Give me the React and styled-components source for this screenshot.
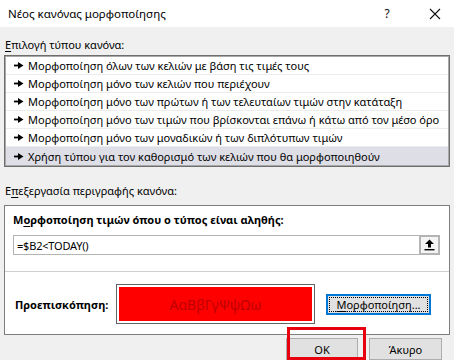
import React from "react";
import styled, { createGlobalStyle } from "styled-components";

const GlobalStyle = createGlobalStyle`
  html, body {
    margin: 0;
    padding: 0;
    background: #f0f0f0;
  }
  body {
    font-family: "Noto Sans", "Open Sans", sans-serif;
    font-size: 11px;
    color: #000;
  }
`;

const Dialog = styled.div`
  position: relative;
  width: 454px;
  height: 360px;
  background: #f0f0f0;
  overflow: hidden;
  display: flex;
  flex-direction: column;
`;

const TitleBar = styled.div`
  height: 27px;
  background: #ffffff;
  display: flex;
  align-items: center;
  padding-left: 8px;
  font-size: 11.5px;
`;

const Title = styled.div`
  flex: 1;
`;

const TitleBtn = styled.div`
  width: ${(p) => p.w}px;
  margin-right: ${(p) => p.mr || 0}px;
  height: 27px;
  display: flex;
  align-items: center;
  justify-content: center;
  color: #111;
  font-size: 12px;
`;

const Body = styled.div`
  padding: 0 4px;
  display: flex;
  flex-direction: column;
`;

const GroupLabel = styled.div`
  height: 18px;
  line-height: 18px;
  margin-top: ${(p) => p.top || 0}px;
  margin-left: 1px;
  margin-bottom: ${(p) => p.bottom || 0}px;
`;

const Ul = styled.span`
  text-decoration: underline;
  text-underline-offset: 2px;
`;

const List = styled.div`
  border: 1px solid #6e6e6e;
  box-shadow: inset 0 0 0 1px #a8a8a8;
  background: #fff;
  padding: 1px;
  display: flex;
  flex-direction: column;
`;

const Row = styled.div`
  height: 18px;
  display: flex;
  align-items: center;
  padding-left: 8px;
  gap: 4px;
  background: ${(p) => (p.selected ? "#dedee6" : "#fff")};
  border-bottom: ${(p) => (p.last ? "none" : "1px solid #ececec")};
  box-sizing: border-box;
  white-space: nowrap;
  svg {
    flex-shrink: 0;
  }
`;

const Panel = styled.div`
  border: 1px solid #7d7d7d;
  background: #fff;
  height: 128px;
  display: flex;
  flex-direction: column;
`;

const FormulaSection = styled.div`
  padding: 5px 9px 0 8px;
  height: 60px;
  border-bottom: 1px solid #cfcfcf;
  display: flex;
  flex-direction: column;
`;

const Heading = styled.div`
  font-weight: bold;
  height: 18px;
  line-height: 18px;
  margin-bottom: 6px;
`;

const FormulaBox = styled.div`
  display: flex;
  height: 20px;
  width: 427px;
`;

const FormulaInput = styled.div`
  flex: 1;
  border: 1px solid #b4b4b4;
  border-right: none;
  display: flex;
  align-items: center;
  padding-left: 3px;
  box-sizing: border-box;
  letter-spacing: -0.2px;
`;

const CollapseBtn = styled.div`
  width: 21px;
  height: 20px;
  box-sizing: border-box;
  border: 2px solid #b4b4b4;
  background: #f4f4f4;
  display: flex;
  align-items: center;
  justify-content: center;
`;

const PreviewSection = styled.div`
  flex: 1;
  display: flex;
  align-items: center;
  padding-left: 10px;
  padding-top: 2px;
`;

const PreviewLabel = styled.div`
  font-weight: bold;
  width: 101px;
`;

const PreviewBox = styled.div`
  width: 199px;
  height: 40px;
  box-sizing: border-box;
  border: 1px solid #646464;
  padding: 2px;
  display: flex;
  margin-right: 11px;
`;

const PreviewFill = styled.div`
  flex: 1;
  background: #ff0000;
  color: #c00000;
  display: flex;
  align-items: center;
  justify-content: center;
  font-size: 14px;
`;

const Button = styled.div`
  box-sizing: border-box;
  width: ${(p) => p.w}px;
  height: ${(p) => p.h || 22}px;
  background: #e1e1e1;
  border: ${(p) => (p.focused ? "2px solid #0078d7" : "1px solid #adadad")};
  display: flex;
  align-items: center;
  justify-content: center;
  padding: ${(p) => (p.focused ? "1px" : "0")};
`;

const FocusRing = styled.div`
  flex: 1;
  align-self: stretch;
  border: 1px dotted #000;
  display: flex;
  align-items: center;
  justify-content: center;
`;

const Footer = styled.div`
  display: flex;
  justify-content: flex-end;
  gap: 11px;
  padding: 3px 8px 0 0;
`;

const Highlight = styled.div`
  position: absolute;
  left: 287px;
  top: 327px;
  width: 79px;
  height: 33px;
  box-sizing: border-box;
  border: 3px solid #e8000f;
  pointer-events: none;
`;

const Bullet = () => (
  <svg width="10" height="7" viewBox="0 0 10 7">
    <rect x="0" y="2.6" width="5" height="1.8" fill="#000" />
    <path d="M4 0 L9.5 3.5 L4 7 Z" fill="#000" />
  </svg>
);

const rules = [
  "Μορφοποίηση όλων των κελιών με βάση τις τιμές τους",
  "Μορφοποίηση μόνο των κελιών που περιέχουν",
  "Μορφοποίηση μόνο των πρώτων ή των τελευταίων τιμών στην κατάταξη",
  "Μορφοποίηση μόνο των τιμών που βρίσκονται επάνω ή κάτω από τον μέσο όρο",
  "Μορφοποίηση μόνο των μοναδικών ή των διπλότυπων τιμών",
  "Χρήση τύπου για τον καθορισμό των κελιών που θα μορφοποιηθούν",
];

export default function App() {
  return (
    <>
      <GlobalStyle />
      <Dialog>
        <TitleBar>
          <Title>Νέος κανόνας μορφοποίησης</Title>
          <TitleBtn w={40} mr={9}>?</TitleBtn>
          <TitleBtn w={38}>
            <svg width="12" height="12" viewBox="0 0 12 12">
              <path d="M1 1 L11 11 M11 1 L1 11" stroke="#111" strokeWidth="1.1" />
            </svg>
          </TitleBtn>
        </TitleBar>
        <Body>
          <GroupLabel top={9} bottom={1}>
            <Ul>Ε</Ul>πιλογή τύπου κανόνα:
          </GroupLabel>
          <List>
            {rules.map((r, i) => (
              <Row key={i} selected={i === 5} last={i === 5}>
                <Bullet />
                {r}
              </Row>
            ))}
          </List>
          <GroupLabel top={15} bottom={5}>
            Ε<Ul>π</Ul>εξεργασία περιγραφής κανόνα:
          </GroupLabel>
          <Panel>
            <FormulaSection>
              <Heading>
                Μ<Ul>ο</Ul>ρφοποίηση τιμών όπου ο τύπος είναι αληθής:
              </Heading>
              <FormulaBox>
                <FormulaInput>=$B2&lt;TODAY()</FormulaInput>
                <CollapseBtn>
                  <svg width="11" height="12" viewBox="0 0 11 12">
                    <path d="M5.5 0.5 L10 5 L7 5 L7 8.5 L4 8.5 L4 5 L1 5 Z" fill="#000" />
                    <rect x="0.5" y="10" width="10" height="1.4" fill="#000" />
                  </svg>
                </CollapseBtn>
              </FormulaBox>
            </FormulaSection>
            <PreviewSection>
              <PreviewLabel>Προεπισκόπηση:</PreviewLabel>
              <PreviewBox>
                <PreviewFill>ΑαΒβΓγΨψΩω</PreviewFill>
              </PreviewBox>
              <Button w={105} h={21} focused>
                <FocusRing>
                  <span>
                    <Ul>Μ</Ul>ορφοποίηση...
                  </span>
                </FocusRing>
              </Button>
            </PreviewSection>
          </Panel>
          <Footer>
            <Button w={72}>OK</Button>
            <Button w={73}>Άκυρο</Button>
          </Footer>
        </Body>
        <Highlight />
      </Dialog>
    </>
  );
}
